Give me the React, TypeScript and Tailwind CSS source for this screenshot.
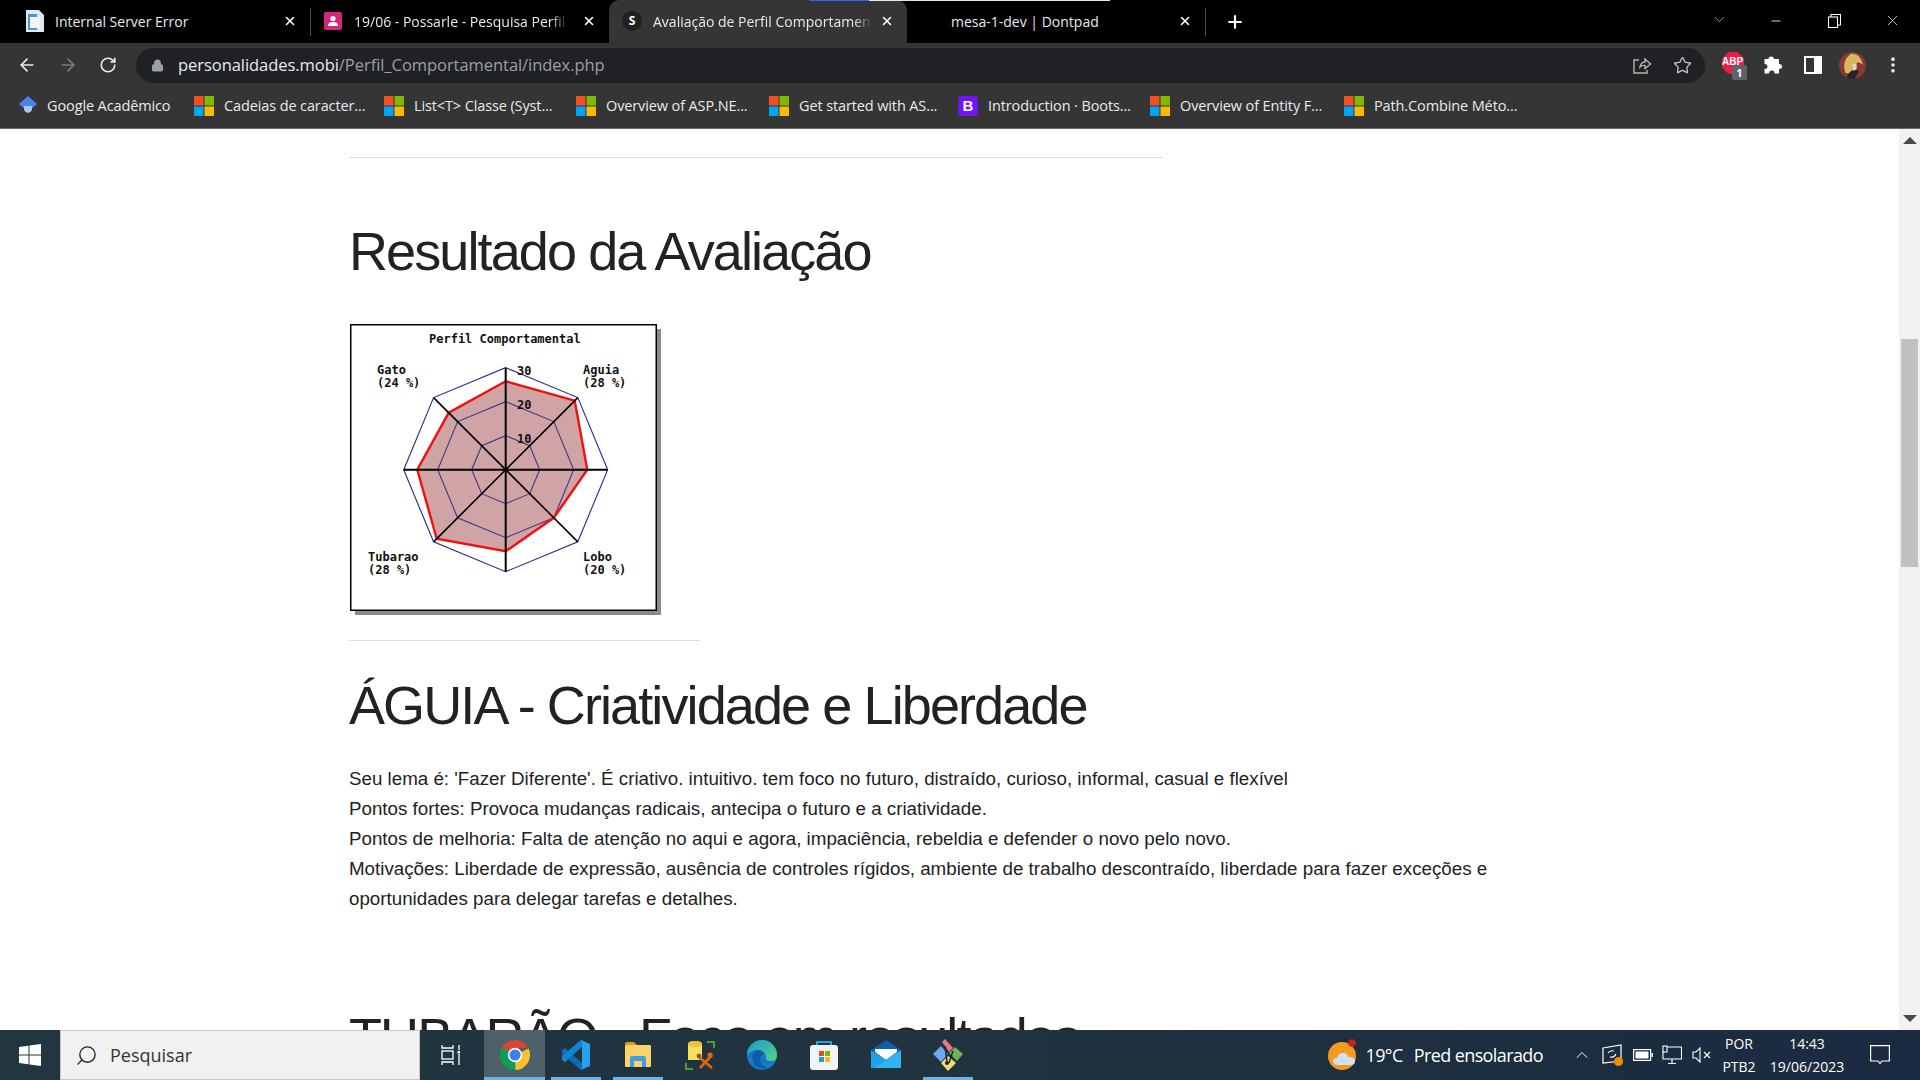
import React from "react";
import { ArrowLeft, ArrowRight, RotateCw, Lock, Star, MoreVertical, ChevronDown, Plus, X, Minus, ChevronUp, Search } from "lucide-react";

function MsLogo({ size = 20 }: { size?: number }) {
  return (
    <svg width={size} height={size} viewBox="0 0 20 20" className="shrink-0">
      <rect x="0" y="0" width="9.5" height="9.5" fill="#f25022" />
      <rect x="10.5" y="0" width="9.5" height="9.5" fill="#7fba00" />
      <rect x="0" y="10.5" width="9.5" height="9.5" fill="#00a4ef" />
      <rect x="10.5" y="10.5" width="9.5" height="9.5" fill="#ffb900" />
    </svg>
  );
}

function Bookmark({ icon, label, width }: { icon: React.ReactNode; label: string; width: number }) {
  return (
    <div className="flex items-center gap-[10px] shrink-0" style={{ width }}>
      {icon}
      <span className="whitespace-nowrap text-[14.5px] text-[#e8eaed] font-['Open_Sans','Noto_Sans',sans-serif] tracking-[-0.12px]">{label}</span>
    </div>
  );
}

function TabClose() {
  return <X size={14} strokeWidth={2.6} className="text-white shrink-0" />;
}

function Sep() {
  return <div className="w-px h-[28px] bg-[#4a4a4a] shrink-0" />;
}

function Radar() {
  const cx = 155.7;
  const cy = 145.7;
  const unit = 3.4;
  const vals = [26, 28.7, 24, 20, 24, 28.7, 26, 23.7];
  const pt = (i: number, r: number) => {
    const a = (i * Math.PI) / 4;
    return [cx + Math.sin(a) * r, cy - Math.cos(a) * r];
  };
  const poly = (r: number) => [0, 1, 2, 3, 4, 5, 6, 7].map((i) => pt(i, r).map((n) => n.toFixed(1)).join(",")).join(" ");
  const red = vals.map((v, i) => pt(i, v * unit).map((n) => n.toFixed(1)).join(",")).join(" ");
  const font = "'DejaVu Sans Mono', 'Liberation Mono', monospace";
  const T = ({ x, y, s }: { x: number; y: number; s: string }) => (
    <text x={x} y={y} fontFamily={font} fontWeight="700" fontSize="12" fill="#111" xmlSpace="preserve">{s}</text>
  );
  return (
    <svg width="312" height="292" viewBox="0 0 312 292" className="block">
      <rect x="5" y="5" width="306" height="286" fill="#8a8a8a" />
      <rect x="0.75" y="0.75" width="305.5" height="285.5" fill="#fff" stroke="#000" strokeWidth="1.5" />
      <polygon points={red} fill="#d0a3a5" />
      {[34, 68, 102].map((r) => (
        <polygon key={r} points={poly(r)} fill="none" stroke="#10107f" strokeOpacity={r === 102 ? 0.9 : 0.75} strokeWidth="1.1" />
      ))}
      <polygon points={red} fill="none" stroke="#f40f0f" strokeWidth="2.4" />
      {[0, 1, 2, 3].map((i) => {
        const a = pt(i, 102);
        const b = pt(i + 4, 102);
        return <line key={i} x1={a[0]} y1={a[1]} x2={b[0]} y2={b[1]} stroke="#000" strokeWidth={i % 2 ? 1.6 : 2} />;
      })}
      <T x={79} y={19} s="Perfil Comportamental" />
      <T x={27} y={50} s="Gato" />
      <T x={27} y={63} s="(24 %)" />
      <T x={233} y={50} s="Aguia" />
      <T x={233} y={63} s="(28 %)" />
      <T x={18} y={237} s="Tubarao" />
      <T x={18} y={250} s="(28 %)" />
      <T x={233} y={237} s="Lobo" />
      <T x={233} y={250} s="(20 %)" />
      <T x={167} y={51} s="30" />
      <T x={167} y={85} s="20" />
      <T x={167} y={119} s="10" />
    </svg>
  );
}

function ChromeIcon() {
  return (
    <svg width="30" height="30" viewBox="0 0 30 30">
      <path d="M15 15 L28.6 8.6 A15 15 0 0 1 15 30 Z" fill="#fbc02d" />
      <path d="M15 15 L15.5 30 A15 15 0 0 1 2 7.5 Z" fill="#0f9d58" />
      <path d="M15 15 L2.2 7.4 A15 15 0 0 1 15 0 A15 15 0 0 1 28 7.5 L15 9 Z" fill="#db4437" />
      <circle cx="15" cy="15" r="7.2" fill="#fff" />
      <circle cx="15" cy="15" r="5.6" fill="#3f7fe8" />
    </svg>
  );
}

function VsIcon() {
  return (
    <svg width="30" height="30" viewBox="0 0 30 30">
      <path d="M1 10 L4 8 L22 24 L22 30 L20 30 L1 14 Z" fill="#0a6db5" />
      <path d="M1 20 L4 22 L22 6 L22 0 L20 0 L1 16 Z" fill="#0f85d3" />
      <path d="M21 0.5 L29 4 L29 26 L21 29.5 Z" fill="#28a0ee" />
    </svg>
  );
}

function FolderIcon() {
  return (
    <svg width="28" height="28" viewBox="0 0 28 28">
      <path d="M1 3 Q1 1 3 1 H10 L13 4 H1 Z" fill="#d99b16" />
      <rect x="1" y="4" width="26" height="22" rx="1" fill="#fcd367" />
      <path d="M6 26 V17 Q6 15 8 15 H20 Q22 15 22 17 V26 H18 V20 H10 V26 Z" fill="#3d9ee8" />
    </svg>
  );
}

function ToolIcon() {
  return (
    <svg width="30" height="30" viewBox="0 0 30 30">
      <path d="M3 4 Q3 1 10 1 Q17 1 17 4 V20 H3 Z" fill="#f9df5a" />
      <ellipse cx="10" cy="4" rx="7" ry="3" fill="#e8c23c" />
      <path d="M22 2 H29 V8 M1 23 V29 H8" fill="none" stroke="#4f9a3f" strokeWidth="2" />
      <path d="M14 17 L27 28 M27 15 L15 28" stroke="#d9670c" strokeWidth="2.8" />
      <circle cx="25" cy="15" r="2.6" fill="#d9670c" />
      <circle cx="14" cy="16" r="2.4" fill="#7a5a3c" />
    </svg>
  );
}

function EdgeIcon() {
  return (
    <svg width="30" height="30" viewBox="0 0 30 30">
      <defs>
        <linearGradient id="e1" x1="0" y1="0" x2="1" y2="1">
          <stop offset="0" stopColor="#1a98d8" />
          <stop offset="1" stopColor="#52d67c" />
        </linearGradient>
      </defs>
      <circle cx="15" cy="15" r="15" fill="#1878c8" />
      <path d="M0 15 A15 15 0 0 1 30 15 Q30 21 24 21 Q18 21 19 17 Q18 10 11 10 Q3 10 0 15 Z" fill="url(#e1)" />
      <path d="M11 10 Q3 13 6 22 Q10 30 22 28 Q13 26 13 19 Q13 15 17 14 Q15 10 11 10 Z" fill="#0c5ea8" />
    </svg>
  );
}

function StoreIcon() {
  return (
    <svg width="28" height="30" viewBox="0 0 28 30">
      <path d="M7 6 V2 H21 V6" fill="none" stroke="#2aa5e0" strokeWidth="2" />
      <rect x="0" y="5" width="28" height="25" rx="3" fill="#f4f4f4" />
      <rect x="9" y="11" width="5" height="5" fill="#e8492a" />
      <rect x="15" y="11" width="5" height="5" fill="#7fba00" />
      <rect x="9" y="17" width="5" height="5" fill="#1a9fe8" />
      <rect x="15" y="17" width="5" height="5" fill="#ffb900" />
    </svg>
  );
}

function MailIcon() {
  return (
    <svg width="30" height="30" viewBox="0 0 30 30">
      <path d="M0 10 L15 0 L30 10 L15 20 Z" fill="#0f5ea8" />
      <path d="M4 9 L26 9 L26 12 L15 20 L4 12 Z" fill="#fff" />
      <path d="M0 10 L15 20 L30 10 V28 H0 Z" fill="#1fa2ea" />
      <path d="M30 10 V28 H4 Z" fill="#38bdf0" opacity="0.7" />
    </svg>
  );
}

function GitIcon() {
  return (
    <svg width="30" height="32" viewBox="0 0 30 32">
      <path d="M9 3 L12 0 L20 9 L16 13 Z" fill="#e4787e" />
      <path d="M0 15 L8 7 L15 15 L8 23 Z" fill="#6ea8f0" />
      <path d="M16 14 L22 8 L30 15 L24 22 Z" fill="#6cb35c" />
      <path d="M8 24 L15 17 L23 24 L15 32 Z" fill="#f1df75" />
      <path d="M12 7 L14 22 M20 12 L16 24" stroke="#222" strokeWidth="1.5" />
      <circle cx="14" cy="24" r="2" fill="#222" />
    </svg>
  );
}

function Pad({ w, children, cls = "" }: { w: number; children?: React.ReactNode; cls?: string }) {
  return (
    <div className={"h-full flex items-center justify-center shrink-0 relative " + cls} style={{ width: w }}>
      {children}
    </div>
  );
}

const Under = () => <div className="absolute bottom-0 left-0 right-0 h-[3px] bg-[#6cb4e8]" />;

export default function App() {
  const ui = "font-['Open_Sans','Noto_Sans',sans-serif]";
  return (
    <div className="w-[1920px] h-[1080px] overflow-hidden flex flex-col bg-white">
      {/* tab strip */}
      <div className={"relative h-[43px] bg-black flex items-end shrink-0 " + ui}>
        <div className="absolute top-0 left-[809px] w-[60px] h-[1px] bg-[#1a73e8]" />
        <div className="absolute top-0 left-[869px] w-[241px] h-[1px] bg-[#e8e8e8]" />
        <div className="w-[310px] h-[43px] shrink-0 flex items-center pl-[24px] pr-[13px] pb-[1px]">
          <svg width="22" height="22" viewBox="0 0 22 22" className="shrink-0">
            <path d="M2 0 H15 L20 5 V22 H2 Z" fill="#dfe9f3" />
            <rect x="4" y="4" width="9" height="16" fill="#4f93c9" />
            <rect x="6" y="7" width="10" height="11" fill="#f3f6f9" />
          </svg>
          <span className="ml-[9px] flex-1 text-[14px] text-[#e8eaed] whitespace-nowrap">Internal Server Error</span>
          <TabClose />
        </div>
        <div className="h-[43px] flex items-center"><Sep /></div>
        <div className="w-[298px] h-[43px] shrink-0 flex items-center pl-[13px] pr-[13px] pb-[1px]">
          <svg width="18" height="18" viewBox="0 0 18 18" className="shrink-0">
            <rect width="18" height="18" rx="2" fill="#d6277f" />
            <circle cx="9" cy="6.5" r="2.6" fill="#fff" />
            <path d="M4 14 Q4 10 9 10 Q14 10 14 14 Z" fill="#fff" />
          </svg>
          <span className="ml-[12px] flex-1 overflow-hidden text-[14px] text-[#e8eaed] whitespace-nowrap [mask-image:linear-gradient(to_right,black_92%,transparent)]">19/06 - Possarle - Pesquisa Perfil</span>
          <span className="ml-[14px]"><TabClose /></span>
        </div>
        <div className="w-[298px] h-[43px] shrink-0 flex items-center pl-[13px] pr-[13px] pb-[1px] bg-[#353535] rounded-t-[10px]">
          <span className="w-[20px] h-[20px] rounded-full bg-[#1f2023] shrink-0 flex items-center justify-center text-[12px] font-bold text-white">S</span>
          <span className="ml-[11px] flex-1 overflow-hidden text-[14px] text-[#e8eaed] whitespace-nowrap [mask-image:linear-gradient(to_right,black_92%,transparent)]">Avaliação de Perfil Comportamen</span>
          <span className="ml-[8px]"><TabClose /></span>
        </div>
        <div className="w-[298px] h-[43px] shrink-0 flex items-center pl-[44px] pr-[13px] pb-[1px]">
          <span className="flex-1 text-[14px] text-[#e8eaed] whitespace-nowrap">mesa-1-dev | Dontpad</span>
          <TabClose />
        </div>
        <div className="h-[43px] flex items-center"><Sep /></div>
        <div className="h-[43px] w-[57px] flex items-center justify-center shrink-0">
          <Plus size={20} strokeWidth={2.6} className="text-white" />
        </div>
        <div className="flex-1" />
        <div className="h-[43px] flex shrink-0">
          <Pad w={58}><ChevronDown size={17} strokeWidth={1} className="text-[#c8c8c8] -translate-y-[2px]" /></Pad>
          <Pad w={56}><Minus size={14} strokeWidth={1.4} className="text-white -translate-y-[1px]" /></Pad>
          <Pad w={60}>
            <svg width="13" height="14" viewBox="0 0 13 14" className="-translate-y-[1px]" fill="none" stroke="#fff" strokeWidth="1.1">
              <rect x="0.5" y="3" width="9" height="10.5" />
              <path d="M3 3 V0.5 H12.5 V11 H9.5" />
            </svg>
          </Pad>
          <Pad w={56}><X size={17} strokeWidth={1} className="text-white -translate-y-[1px]" /></Pad>
        </div>
      </div>
      {/* toolbar */}
      <div className={"h-[44px] bg-[#353535] flex items-center shrink-0 " + ui}>
        <div className="w-[54px] flex justify-center"><ArrowLeft size={20} strokeWidth={2} className="text-[#e8eaed]" /></div>
        <div className="w-[28px] flex justify-center"><ArrowRight size={20} strokeWidth={2} className="text-[#7a7a7a]" /></div>
        <div className="w-[52px] flex justify-center"><RotateCw size={18} strokeWidth={2.2} className="text-[#e8eaed]" /></div>
        <div className="ml-[2px] w-[1569px] h-[35px] rounded-full bg-[#202124] flex items-center pl-[15px] pr-[13px] shrink-0">
          <Lock size={13} strokeWidth={2.4} className="text-[#9aa0a6] fill-[#9aa0a6] shrink-0" />
          <span className="ml-[14px] text-[16.5px] tracking-[-0.05px] whitespace-nowrap text-[#e8eaed]">
            personalidades.mobi<span className="text-[#9aa0a6]">/Perfil_Comportamental/index.php</span>
          </span>
          <div className="flex-1" />
          <svg width="20" height="20" viewBox="0 0 20 20" fill="none" stroke="#b5b5b5" strokeWidth="1.4">
            <path d="M8 12 Q9 7 13 7 V4 L18.5 9 L13 13.5 V10.5 Q10 10 8 12 Z" />
            <path d="M7 5 H2 V18 H15 V15" />
          </svg>
          <Star size={19} strokeWidth={1.7} className="ml-[21px] text-[#c4c4c4]" />
        </div>
        <div className="ml-[14px] relative w-[28px] h-[28px] shrink-0 flex items-center justify-center">
          <svg width="22" height="22" viewBox="0 0 22 22" className="-translate-y-[2px]"><polygon points="6.5,0 15.5,0 22,6.5 22,15.5 15.5,22 6.5,22 0,15.5 0,6.5" fill="#ee1c48" /></svg>
          <span className="absolute left-[3px] top-[5px] text-[10px] font-bold text-white leading-[12px] font-['Liberation_Sans',sans-serif]">ABP</span>
          <span className="absolute left-[13px] top-[14px] w-[15px] h-[15px] rounded-[2px] bg-[#5f6368] text-[11px] leading-[15px] text-center text-white font-bold">1</span>
        </div>
        <div className="ml-[17px] w-[18px] flex justify-center shrink-0">
          <svg width="18" height="18" viewBox="0 0 18 18"><path d="M7 0.5 Q10 0.5 10 3 H15 V8 Q18 8 18 10.5 Q18 13 15 13 V17.5 H10.5 Q10.5 14.5 8 14.5 Q5 14.5 5 17.5 H0.5 V13 Q3.5 13 3.5 10.5 Q3.5 8 0.5 8 V3 H4.5 Q4.5 0.5 7 0.5 Z" fill="#fff" /></svg>
        </div>
        <div className="ml-[22px] shrink-0 w-[18px] h-[18px] border-[2px] border-white border-r-[8px] bg-[#353535]" />
        <div className="ml-[17px] w-[27px] h-[27px] rounded-full bg-[#8a3a32] shrink-0 overflow-hidden">
          <svg width="27" height="27" viewBox="0 0 26 26">
            <path d="M6 20 Q2 9 11 2 Q20 0 23 12 Q17 8 15 12 Q14 20 10 21 Z" fill="#d7b860" />
            <path d="M9 21 L16 14 L19 19 L15 26 L6 26 Z" fill="#2a2424" />
            <path d="M13 12 L17 10 L17 17 L13 18 Z" fill="#e8cdb8" />
          </svg>
        </div>
        <div className="ml-[25px] w-[4px] flex justify-center shrink-0">
          <MoreVertical size={20} strokeWidth={2.4} className="text-[#e8eaed] shrink-0" />
        </div>
      </div>
      {/* bookmarks */}
      <div className={"h-[42px] bg-[#353535] border-b border-[#6a6a6a] flex items-center pl-[19px] pb-[4px] shrink-0 " + ui}>
        <Bookmark
          width={175}
          label="Google Acadêmico"
          icon={
            <svg width="18" height="20" viewBox="0 0 18 20" className="shrink-0">
              <path d="M9 0 L18 8 L9 16 L0 8 Z" fill="#4a84ea" />
              <path d="M5 10 H13 V14 Q9 20 5 14 Z" fill="#a6c8f6" />
            </svg>
          }
        />
        <Bookmark width={190} label="Cadeias de caracter..." icon={<MsLogo />} />
        <Bookmark width={192} label="List<T> Classe (Syst..." icon={<MsLogo />} />
        <Bookmark width={193} label="Overview of ASP.NE..." icon={<MsLogo />} />
        <Bookmark width={189} label="Get started with AS..." icon={<MsLogo />} />
        <Bookmark
          width={192}
          label="Introduction · Boots..."
          icon={<span className="w-[20px] h-[20px] rounded-[3px] bg-[#7214f2] text-white font-bold text-[15px] leading-[20px] text-center shrink-0 font-['Liberation_Sans',sans-serif]">B</span>}
        />
        <Bookmark width={194} label="Overview of Entity F..." icon={<MsLogo />} />
        <Bookmark width={190} label="Path.Combine Méto..." icon={<MsLogo />} />
      </div>
      {/* page */}
      <div className="flex-1 min-h-0 flex">
        <main className="flex-1 min-w-0 overflow-hidden pl-[349px] font-['Liberation_Sans',Arial,sans-serif] text-[#222]">
          <hr className="mt-[28px] w-[814px] border-0 border-t border-[#dcdcdc]" />
          <h2 className="mt-[63px] text-[54px] leading-[60px] tracking-[-1.9px] font-normal whitespace-nowrap">Resultado da Avaliação</h2>
          <div className="mt-[43px] ml-px"><Radar /></div>
          <hr className="mt-[24px] w-[351px] border-0 border-t border-[#dcdcdc]" />
          <h2 className="mt-[34px] text-[54px] leading-[60px] tracking-[-1.9px] font-normal whitespace-nowrap">ÁGUIA - Criatividade e Liberdade</h2>
          <div className="mt-[29px] w-[1160px] text-[18.75px] leading-[30px] text-[#222]">
            <p>Seu lema é: 'Fazer Diferente'. É criativo. intuitivo. tem foco no futuro, distraído, curioso, informal, casual e flexível</p>
            <p>Pontos fortes: Provoca mudanças radicais, antecipa o futuro e a criatividade.</p>
            <p>Pontos de melhoria: Falta de atenção no aqui e agora, impaciência, rebeldia e defender o novo pelo novo.</p>
            <p>Motivações: Liberdade de expressão, ausência de controles rígidos, ambiente de trabalho descontraído, liberdade para fazer exceções e oportunidades para delegar tarefas e detalhes.</p>
          </div>
          <h2 className="mt-[93px] text-[54px] leading-[60px] tracking-[-1.9px] font-normal whitespace-nowrap">TUBARÃO - Foco em resultados</h2>
        </main>
        <div className="w-[21px] shrink-0 bg-[#f1f1f1] flex flex-col items-center">
          <div className="mt-[8px] w-0 h-0 border-l-[7px] border-r-[7px] border-b-[7px] border-l-transparent border-r-transparent border-b-[#4a4a4a]" />
          <div className="mt-[195px] w-[17px] h-[228px] bg-[#c1c1c1]" />
          <div className="flex-1" />
          <div className="mb-[8px] w-0 h-0 border-l-[7px] border-r-[7px] border-t-[7px] border-l-transparent border-r-transparent border-t-[#4a4a4a]" />
        </div>
      </div>
      {/* taskbar */}
      <div className={"h-[50px] shrink-0 flex items-center bg-gradient-to-r from-[#21363f] via-[#20333f] to-[#1b2a41] " + ui}>
        <div className="w-[60px] h-full flex items-center justify-center shrink-0">
          <svg width="22" height="22" viewBox="0 0 22 22" fill="#fff">
            <path d="M0 3 L9.5 1.7 V10.5 H0 Z M10.5 1.5 L22 0 V10.5 H10.5 Z M0 11.5 H9.5 V20.3 L0 19 Z M10.5 11.5 H22 V22 L10.5 20.5 Z" />
          </svg>
        </div>
        <div className="w-[360px] h-full shrink-0 bg-[#f1f1f1] border border-[#c8c8c8] flex items-center pl-[14px]">
          <Search size={23} strokeWidth={1.4} className="text-[#222] -scale-x-100" />
          <span className="ml-[12px] text-[18px] text-[#333]">Pesquisar</span>
        </div>
        <Pad w={64}>
          <svg width="19" height="20" viewBox="0 0 19 20" fill="none" stroke="#fff" strokeWidth="1.3" className="-translate-x-[2px]">
            <path d="M1 0 V3 H12 V0 M1 20 V17 H12 V20" />
            <rect x="1" y="6" width="11" height="8" />
            <path d="M18 0 V5 M18 9 V20" />
            <rect x="16.5" y="6" width="3" height="2.5" fill="#fff" stroke="none" />
          </svg>
        </Pad>
        <Pad w={61} cls="bg-[#4e6168]"><ChromeIcon /><Under /></Pad>
        <Pad w={6} />
        <Pad w={50}><VsIcon /><Under /></Pad>
        <Pad w={12} />
        <Pad w={50}><FolderIcon /><Under /></Pad>
        <Pad w={12} />
        <Pad w={50}><ToolIcon /></Pad>
        <Pad w={12} />
        <Pad w={50}><EdgeIcon /></Pad>
        <Pad w={12} />
        <Pad w={50}><StoreIcon /></Pad>
        <Pad w={12} />
        <Pad w={50}><MailIcon /></Pad>
        <Pad w={12} />
        <Pad w={50}><GitIcon /><Under /></Pad>
        <div className="flex-1" />
        <div className="flex items-center shrink-0 text-white h-full">
          <svg width="30" height="32" viewBox="0 0 30 32" className="shrink-0">
            <circle cx="14" cy="17" r="14" fill="#f39a1f" />
            <circle cx="24" cy="4" r="3.8" fill="#c8231a" />
            <path d="M10 26 Q5 26 5 22 Q5 19 9 19 Q10 14 15 14 Q20 14 20 18 Q27 18 27 22 Q27 26 23 26 Z" fill="#cfe0f2" />
          </svg>
          <span className="ml-[7px] text-[18px] tracking-[-0.6px]">19°C</span>
          <span className="ml-[11px] text-[18px] tracking-[-0.6px]">Pred ensolarado</span>
          <div className="ml-[29px] w-[20px] flex justify-center"><ChevronUp size={22} strokeWidth={1.2} className="text-white" /></div>
          <div className="ml-[10px] relative w-[20px] h-[22px]">
            <svg width="20" height="20" viewBox="0 0 20 20" fill="none" stroke="#fff" strokeWidth="1.2">
              <path d="M1 4 L19 1 V17 L1 19 Z" />
              <path d="M6 9 Q8 6 12 7 M14 10 Q12 14 8 13" />
            </svg>
            <span className="absolute right-[-1px] bottom-[0px] w-[9px] h-[9px] rounded-full bg-[#f38b00]" />
          </div>
          <div className="ml-[11px]">
            <svg width="20" height="12" viewBox="0 0 20 12" className="block"><rect x="0.6" y="0.6" width="17" height="10.8" fill="none" stroke="#fff" strokeWidth="1.2" /><rect x="2.5" y="2.5" width="13" height="7" fill="#fff" /><rect x="18.5" y="4" width="1.5" height="4" fill="#fff" /></svg>
          </div>
          <div className="ml-[9px]">
            <svg width="20" height="20" viewBox="0 0 20 20" fill="none" stroke="#fff" strokeWidth="1.1" className="block">
              <path d="M5 2 H19.5 V14 H1 V7" />
              <rect x="1" y="1" width="4" height="6" />
              <path d="M10 14 V18 M6 18.5 H14" />
            </svg>
          </div>
          <div className="ml-[10px]">
            <svg width="20" height="16" viewBox="0 0 20 16" fill="none" stroke="#fff" strokeWidth="1.1" className="block">
              <path d="M1 5 H4 L8 1 V15 L4 11 H1 Z" />
              <path d="M12 5 L18 11 M18 5 L12 11" />
            </svg>
          </div>
          <div className="ml-[7px] w-[40px] flex flex-col items-center text-[14px] leading-[23px]">
            <span>POR</span>
            <span>PTB2</span>
          </div>
          <div className="ml-[4px] w-[88px] flex flex-col items-center text-[14px] leading-[23px]">
            <span>14:43</span>
            <span>19/06/2023</span>
          </div>
          <div className="ml-[19px] mr-[30px]">
            <svg width="20" height="20" viewBox="0 0 20 20" fill="none" stroke="#fff" strokeWidth="1.2" className="block">
              <path d="M0.6 0.6 H19.4 V16 H12 L10 18.5 L8 16 H0.6 Z" />
            </svg>
          </div>
        </div>
      </div>
    </div>
  );
}
